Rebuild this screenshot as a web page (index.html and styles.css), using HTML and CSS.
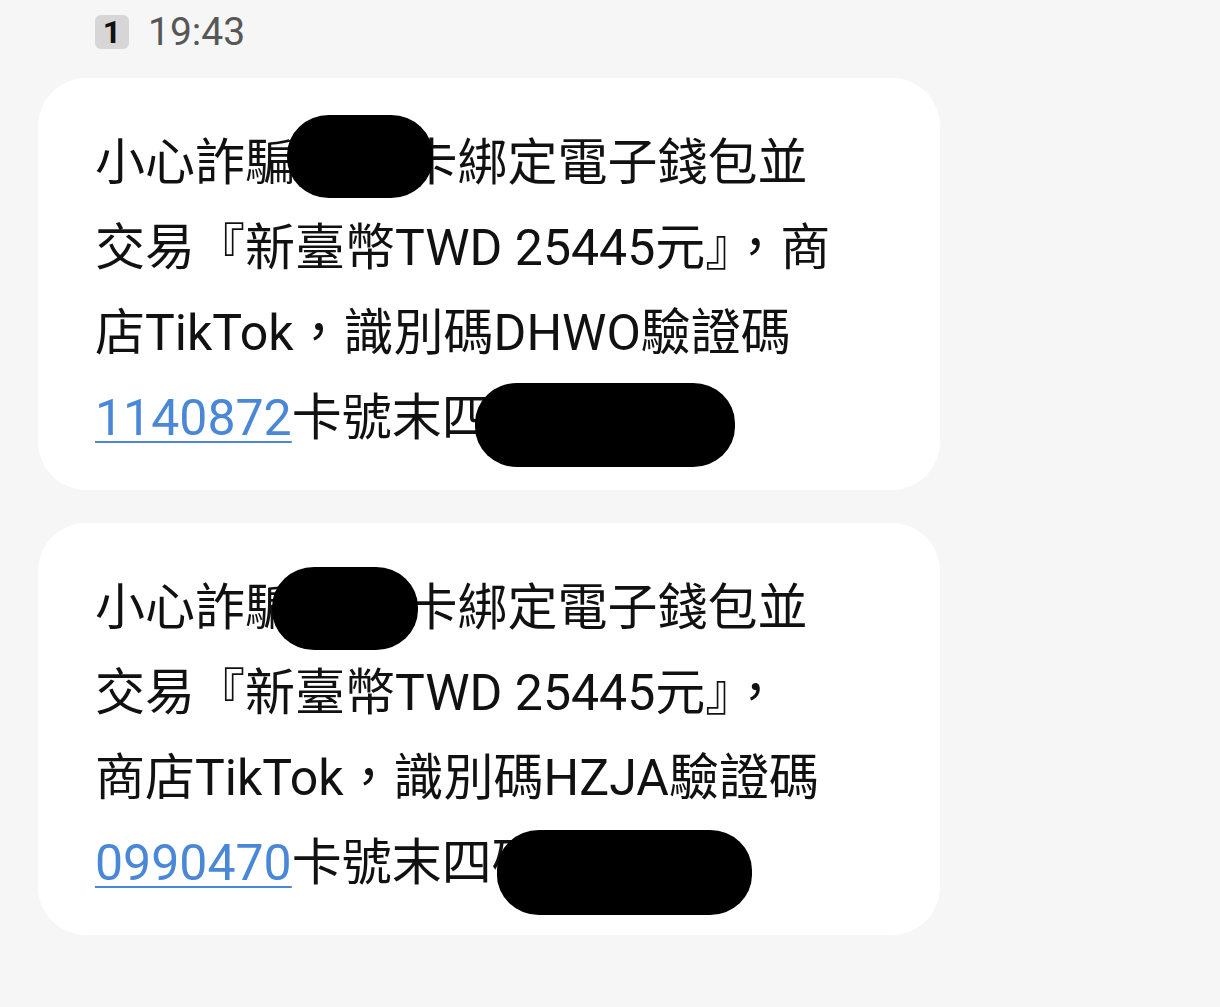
FILE: index.html
```html
<!DOCTYPE html>
<html lang="zh-Hant">
<head>
    <meta charset="UTF-8">
    <meta name="viewport" content="width=device-width, initial-scale=1.0">
    <title>簡訊</title>
    <link rel="stylesheet" href="styles.css">
</head>
<body>
    <div class="msg-head">
        <span class="sim">1</span>
        <span class="time">19:43</span>
    </div>

    <div class="bubble">
        <p class="msg-text">小心詐騙您的 卡綁定電子錢包並<br>交易『新臺幣TWD 25445元』，商<br>店TikTok，識別碼DHWO驗證碼<br><a href="#" class="code">1140872</a>卡號末四碼0000</p>
        <span class="blot blot-a1"></span>
        <span class="blot blot-b1"></span>
    </div>

    <div class="bubble">
        <p class="msg-text">小心詐騙您的 卡綁定電子錢包並<br>交易『新臺幣TWD 25445元』，<br>商店TikTok，識別碼HZJA驗證碼<br><a href="#" class="code">0990470</a>卡號末四碼0000</p>
        <span class="blot blot-a2"></span>
        <span class="blot blot-b2"></span>
    </div>
</body>
</html>
```

FILE: styles.css
```css
body {
    margin: 0;
    background-color: #f6f6f6;
    font-family: Roboto, "Noto Sans CJK TC", sans-serif;
    color: #111;
}
.msg-head {
    display: flex;
    align-items: center;
    gap: 19px;
    padding: 15px 0 0 95px;
    height: 34px;
}
.sim {
    width: 34px;
    height: 34px;
    border-radius: 6px;
    background-color: #d6d6d6;
    color: #111;
    font-weight: bold;
    font-size: 32px;
    display: flex;
    align-items: center;
    justify-content: center;
}
.time {
    font-size: 39px;
    color: #575757;
}
.bubble {
    position: relative;
    width: 902px;
    margin: 29px 0 33px 38px;
    background-color: #fff;
    border-radius: 48px;
    padding: 43px 0 29px 57px;
    box-sizing: border-box;
    overflow: hidden;
}
.bubble + .bubble {
    margin-top: 0;
}
.msg-text {
    margin: 0;
    font-size: 50px;
    line-height: 85px;
}
.code {
    color: #4a87d6;
    text-decoration: underline;
    text-decoration-thickness: 2px;
    text-underline-offset: 6px;
}
/* black marker over the card details */
.blot {
    position: absolute;
    background-color: #000;
    border-radius: 42px / 40px;
}
.blot-a1 { left: 249px; top: 37px; width: 146px; height: 83px; }
.blot-b1 { left: 437px; top: 305px; width: 260px; height: 84px; }
.blot-a2 { left: 234px; top: 44px; width: 146px; height: 83px; }
.blot-b2 { left: 459px; top: 307px; width: 255px; height: 85px; }
```
